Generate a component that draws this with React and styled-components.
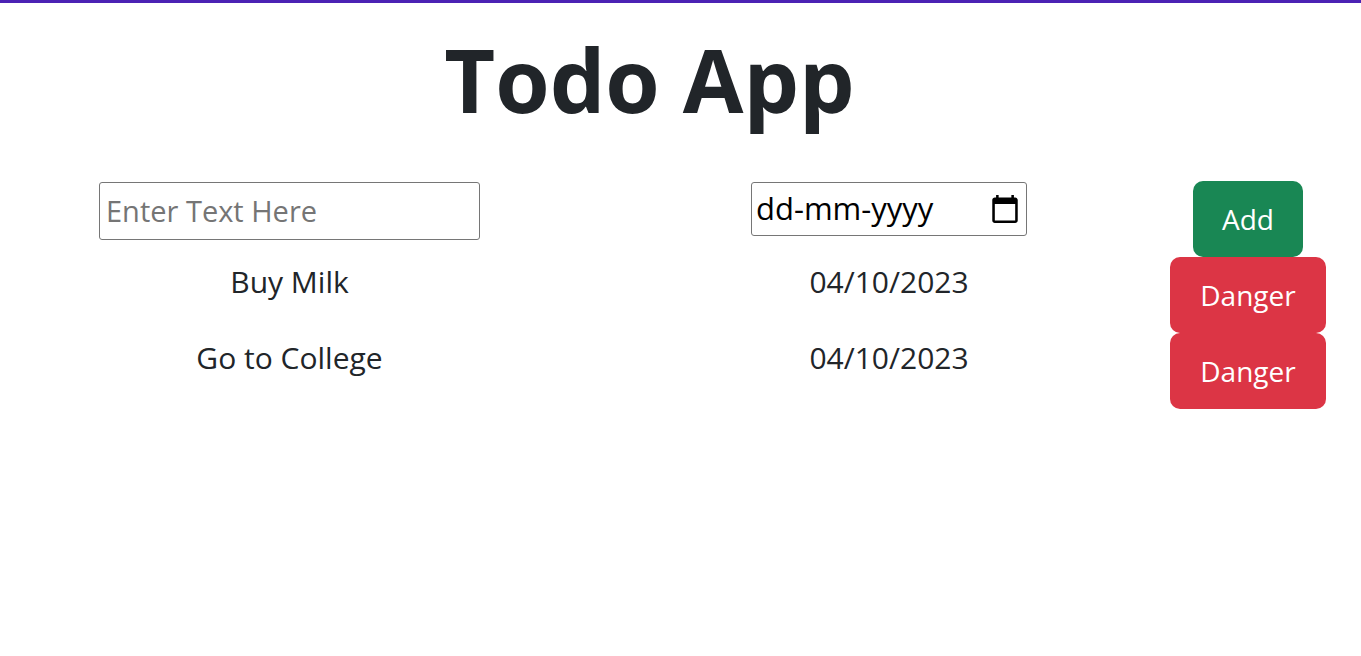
import React, { useState } from "react";
import styled, { createGlobalStyle } from "styled-components";

const GlobalStyle = createGlobalStyle`
	html, body {
		margin: 0;
		padding: 0;
		background: #fff;
	}
	body {
		border-top: 3px solid #4b22b4;
		font-family: "Segoe UI", "Open Sans", "Liberation Sans", sans-serif;
		color: #212529;
	}
`;

const Page = styled.div`
	min-height: 653px;
`;

const Title = styled.h1`
	margin: 0;
	padding-top: 24px;
	padding-right: 62px;
	text-align: center;
	font-size: 88px;
	font-weight: 700;
	line-height: 1.2;
	color: #212529;
`;

const Table = styled.div`
	margin-top: 48px;
	padding-left: 99px;
	display: flex;
	flex-direction: column;
`;

// input / spacer / date / spacer / button
const Row = styled.div`
	display: grid;
	grid-template-columns: 381px 220px 378px 92px 156px;
	align-items: start;
`;

const Cell = styled.div`
	grid-column: ${(p) => p.$col};
	display: flex;
	justify-content: center;
	font-size: 30px;
	line-height: 1.5;
	padding-top: 2px;
`;

const TextInput = styled.input`
	box-sizing: border-box;
	width: 381px;
	height: 58px;
	margin-top: -1px;
	padding: 0 6px;
	border: 1px solid #767676;
	border-radius: 3px;
	font-family: inherit;
	font-size: 29px;
	color: #212529;
	outline: none;

	&::placeholder {
		color: #757575;
	}
`;

const DateField = styled.label`
	box-sizing: border-box;
	width: 276px;
	height: 54px;
	margin-top: -1px;
	padding: 0 8px 0 4px;
	border: 1px solid #767676;
	border-radius: 3px;
	display: flex;
	align-items: center;
	justify-content: space-between;
	font-size: 31px;
	line-height: 1;
	color: #000;
	cursor: text;
`;

const Button = styled.button`
	box-sizing: border-box;
	height: 76px;
	padding: 0 ${(p) => (p.$variant === "danger" ? "30px" : "29px")};
	border: none;
	border-radius: 10px;
	font-family: inherit;
	font-size: 28px;
	line-height: 1.5;
	color: #fff;
	background: ${(p) => (p.$variant === "danger" ? "#dc3545" : "#198754")};
	cursor: pointer;
`;

const ButtonCell = styled.div`
	grid-column: 5;
	display: flex;
	justify-content: center;
`;

const CalendarIcon = () => (
	<svg width="26" height="28" viewBox="2 1 20 22" aria-hidden="true">
		<path
			fill="#000"
			d="M20 3h-1V1h-2v2H7V1H5v2H4c-1.1 0-2 .9-2 2v16c0 1.1.9 2 2 2h16c1.1 0 2-.9 2-2V5c0-1.1-.9-2-2-2zm0 18H4V8h16v13z"
		/>
	</svg>
);

const todos = [
	{ name: "Buy Milk", date: "04/10/2023" },
	{ name: "Go to College", date: "04/10/2023" },
];

export default function App() {
	const [text, setText] = useState("");

	return (
		<Page>
			<GlobalStyle />
			<Title>Todo App</Title>
			<Table>
				<Row>
					<Cell $col={1}>
						<TextInput
							placeholder='Enter Text Here'
							value={text}
							onChange={(e) => setText(e.target.value)}
						/>
					</Cell>
					<Cell $col={3}>
						<DateField>
							<span>dd-mm-yyyy</span>
							<CalendarIcon />
						</DateField>
					</Cell>
					<ButtonCell>
						<Button>Add</Button>
					</ButtonCell>
				</Row>
				{todos.map((t, i) => (
					<Row key={i}>
						<Cell $col={1}>{t.name}</Cell>
						<Cell $col={3}>{t.date}</Cell>
						<ButtonCell>
							<Button $variant='danger'>Danger</Button>
						</ButtonCell>
					</Row>
				))}
			</Table>
		</Page>
	);
}
